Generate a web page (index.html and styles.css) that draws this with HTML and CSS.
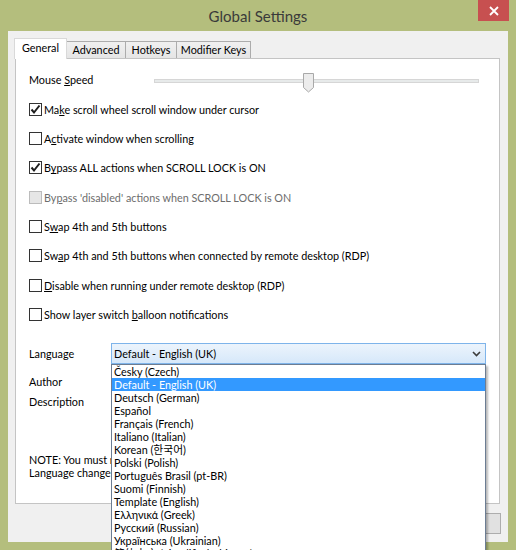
FILE: index.html
```html
<!DOCTYPE html>
<html>
<head>
<meta charset="utf-8">
<link rel="stylesheet" href="styles.css">
</head>
<body>
<div class="window">
  <div class="titlebar">
    <span></span>
    <div class="title">Global Settings</div>
    <div class="close-area">
      <div class="close">
        <svg width="10" height="10" viewBox="0 0 10 10"><path d="M1 1 L9 9 M9 1 L1 9" stroke="#fff" stroke-width="1.8" fill="none"/></svg>
      </div>
    </div>
  </div>
  <div class="client">
    <div class="tabs">
      <div class="tab active w-general">General</div>
      <div class="tab w-advanced">Advanced</div>
      <div class="tab w-hotkeys">Hotkeys</div>
      <div class="tab w-modifier">Modifier Keys</div>
    </div>
    <div class="panel">
      <div class="row">
        <span class="speed-label">Mouse <u>S</u>peed</span>
        <div class="slider">
          <div class="track"></div>
          <svg class="thumb" width="11" height="20" viewBox="0 0 11 20"><path d="M0.5 0.5 H10.5 V14.5 L5.5 19 L0.5 14.5 Z" fill="#ececec" stroke="#a9a9a9"/></svg>
        </div>
      </div>
      <div class="row"><span class="check on"><svg width="11" height="11" viewBox="0 0 11 11"><path d="M1.5 5.5 L4 8.5 L9.5 1.5" stroke="#1e1e1e" stroke-width="2" fill="none"/></svg></span><span>Ma<u>k</u>e scroll wheel scroll window under cursor</span></div>
      <div class="row"><span class="check"></span><span>A<u>c</u>tivate window when scrolling</span></div>
      <div class="row"><span class="check on"><svg width="11" height="11" viewBox="0 0 11 11"><path d="M1.5 5.5 L4 8.5 L9.5 1.5" stroke="#1e1e1e" stroke-width="2" fill="none"/></svg></span><span>B<u>y</u>pass ALL actions when SCROLL LOCK is ON</span></div>
      <div class="row disabled"><span class="check"></span><span>By<u>p</u>ass 'disabled' actions when SCROLL LOCK is ON</span></div>
      <div class="row"><span class="check"></span><span>S<u>w</u>ap 4th and 5th buttons</span></div>
      <div class="row"><span class="check"></span><span>Sw<u>a</u>p 4th and 5th buttons when connected by remote desktop (RDP)</span></div>
      <div class="row"><span class="check"></span><span><u>D</u>isable when running under remote desktop (RDP)</span></div>
      <div class="row"><span class="check"></span><span>Show layer switch <u>b</u>alloon notifications</span></div>

      <div class="lang-row">
        <span class="lang-label">Language</span>
        <div class="combo">
          <span class="combo-text">Default - English (UK)</span>
          <svg class="chevron" width="9" height="6" viewBox="0 0 9 6"><path d="M1 1 L4.5 4.5 L8 1" stroke="#3c3c3c" stroke-width="1.6" fill="none"/></svg>
          <div class="dropdown">
            <div class="item">Česky (Czech)</div>
            <div class="item selected">Default - English (UK)</div>
            <div class="item">Deutsch (German)</div>
            <div class="item">Español</div>
            <div class="item">Français (French)</div>
            <div class="item">Italiano (Italian)</div>
            <div class="item">Korean (한국어)</div>
            <div class="item">Polski (Polish)</div>
            <div class="item">Português Brasil (pt-BR)</div>
            <div class="item">Suomi (Finnish)</div>
            <div class="item">Template (English)</div>
            <div class="item">Ελληνικά (Greek)</div>
            <div class="item">Русский (Russian)</div>
            <div class="item">Українська (Ukrainian)</div>
            <div class="item cjk">简体中文 (Simplified Chinese)</div>
          </div>
        </div>
      </div>
      <div class="info-row first">Author</div>
      <div class="info-row">Description</div>
      <div class="note">
        <div>NOTE: You must restart the application for</div>
        <div>Language changes to take effect.</div>
      </div>
    </div>
    <div class="buttons">
      <div class="button">OK</div>
      <div class="button">Cancel</div>
    </div>
  </div>
</div>
</body>
</html>
```
FILE: styles.css
```css
body {
  margin: 0;
}

.window {
  width: 516px;
  height: 550px;
  background: #b4be7d;
  display: flex;
  flex-direction: column;
  overflow: hidden;
  font-family: Lato, "Noto Sans CJK KR", sans-serif;
  font-size: 10.8px;
  color: #000;
}

.titlebar {
  height: 31px;
  flex: none;
  display: grid;
  grid-template-columns: 1fr auto 1fr;
}

.title {
  font-size: 15px;
  color: #3a3a3a;
  line-height: 32px;
}

.close-area {
  justify-self: end;
  margin-right: 7px;
}

.close {
  width: 31px;
  height: 21px;
  background: #c75050;
  display: flex;
  align-items: center;
  justify-content: center;
}

.client {
  flex: none;
  margin: 0 8px;
  height: 511px;
  box-sizing: border-box;
  background: #f0f0f0;
  padding: 7px 8px 0 7px;
}

.tabs {
  display: flex;
  align-items: flex-end;
  height: 20px;
  margin-left: -1px;
}

.tab {
  height: 17px;
  box-sizing: border-box;
  border: 1px solid #acacac;
  border-bottom: none;
  background: linear-gradient(#f0f0f0, #e5e5e5);
  margin-left: -1px;
  display: flex;
  align-items: center;
  justify-content: center;
  line-height: 1;
  white-space: nowrap;
  padding-top: 1px;
}

.tab:first-child {
  margin-left: 0;
}

.tab.active {
  height: 21px;
  margin-bottom: -1px;
  background: #fff;
  border-color: #d9d9d9;
  position: relative;
  z-index: 1;
  padding-top: 0;
  padding-bottom: 1px;
}

.w-general { width: 53px; }
.w-advanced { width: 60px; }
.w-hotkeys { width: 52px; }
.w-modifier { width: 75px; }

.panel {
  height: 446px;
  box-sizing: border-box;
  border: 1px solid #c4c4c4;
  background: #fff;
  padding: 6.35px 0 0 13px;
}

.row {
  height: 29.3px;
  display: flex;
  align-items: center;
  white-space: nowrap;
}

.row.disabled {
  color: #6d6d6d;
}

.speed-label {
  width: 125px;
  flex: none;
}

.slider {
  position: relative;
  width: 325px;
  height: 20px;
  align-self: flex-start;
  margin-top: 7.6px;
}

.track {
  margin-top: 6px;
  height: 4px;
  box-sizing: border-box;
  border: 1px solid #d6d6d6;
  background: #e7eaea;
}

.thumb {
  position: absolute;
  left: 149px;
  top: 0;
}

.check {
  width: 13px;
  height: 13px;
  box-sizing: border-box;
  border: 1px solid #333;
  background: #fff;
  margin-right: 2px;
  flex: none;
  display: flex;
  align-items: center;
  justify-content: center;
}

.row.disabled .check {
  background: #e6e6e6;
  border-color: #bcbcbc;
}

.lang-row {
  margin-top: 14px;
  display: flex;
  align-items: center;
  height: 21px;
}

.lang-label {
  width: 82px;
  flex: none;
}

.combo {
  position: relative;
  width: 375px;
  height: 21px;
  box-sizing: border-box;
  border: 1px solid #7eb4ea;
  background: linear-gradient(#ecf4fc, #d6e8fa);
  display: flex;
  align-items: center;
  justify-content: space-between;
  padding: 0 4px 0 2px;
}

.chevron {
  margin-top: 1px;
}

.dropdown {
  position: absolute;
  left: -1px;
  top: 20px;
  width: 375px;
  box-sizing: border-box;
  border: 1px solid #6c7d93;
  background: #fff;
  box-shadow: 2px 2px 2px rgba(0, 0, 0, 0.28);
  z-index: 5;
}

.item {
  height: 13px;
  line-height: 13px;
  padding-left: 2px;
  white-space: nowrap;
}

.item.selected {
  background: #3399ff;
  color: #fff;
}

.item.cjk {
  font-family: Lato, "Noto Sans CJK SC", sans-serif;
}

.info-row {
  height: 20px;
  line-height: 20px;
}

.info-row.first {
  margin-top: 8px;
}

.note {
  margin-top: 40.5px;
  line-height: 13px;
  width: 82px;
  overflow: hidden;
  white-space: nowrap;
}

.buttons {
  display: flex;
  justify-content: flex-end;
  gap: 6px;
  margin-top: 9px;
  margin-right: -1px;
}

.button {
  width: 75px;
  height: 21px;
  box-sizing: border-box;
  border: 1px solid #adadad;
  background: #e1e1e1;
  display: flex;
  align-items: center;
  justify-content: center;
}
```
